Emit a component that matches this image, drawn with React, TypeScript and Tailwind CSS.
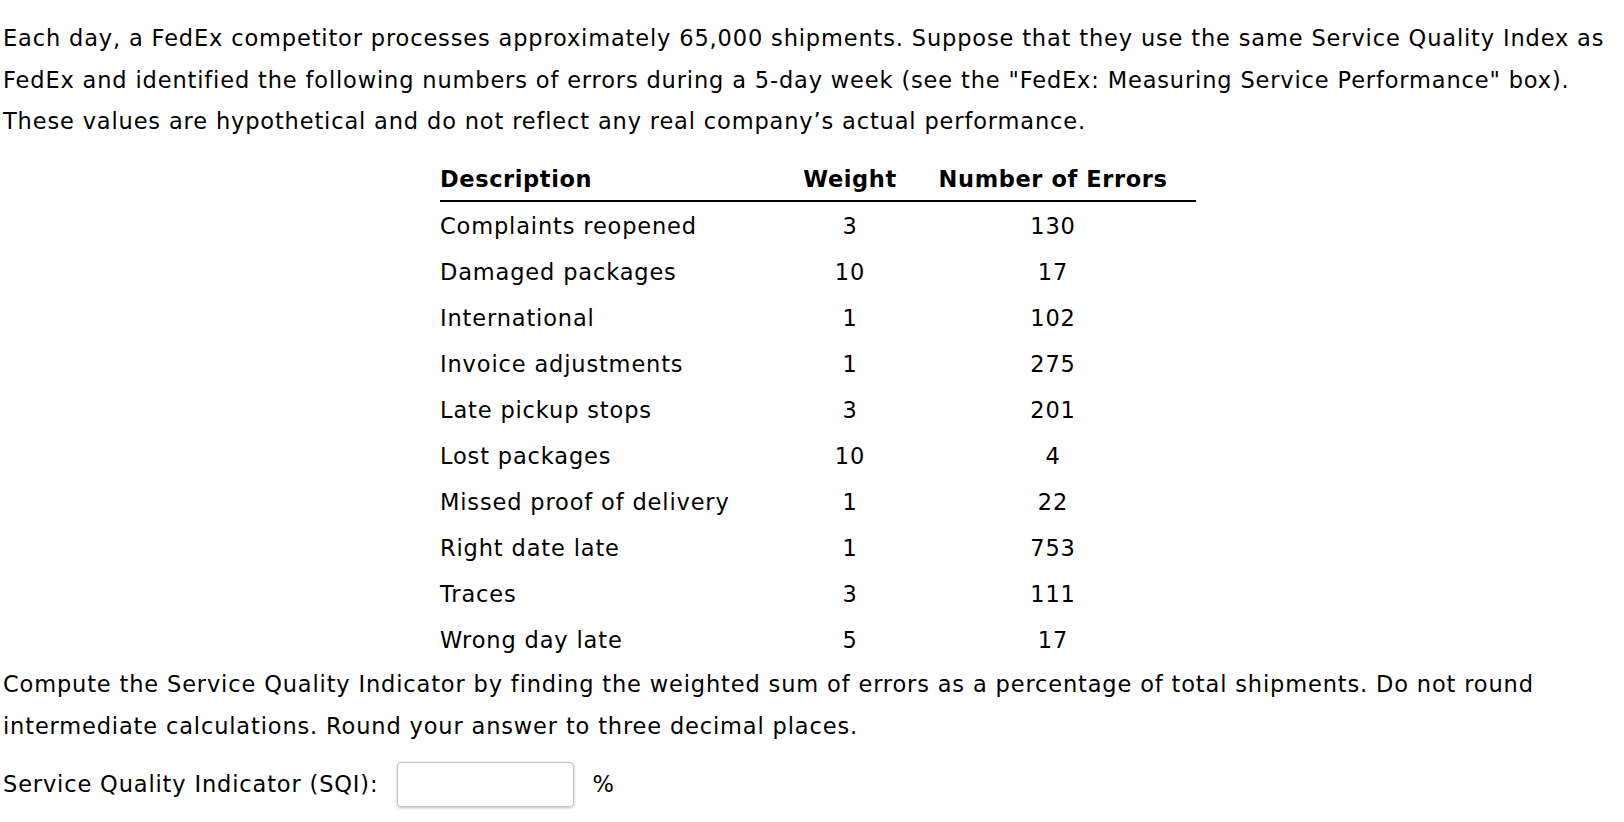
import React from "react";

const rows: [string, string, string][] = [
  ["Complaints reopened", "3", "130"],
  ["Damaged packages", "10", "17"],
  ["International", "1", "102"],
  ["Invoice adjustments", "1", "275"],
  ["Late pickup stops", "3", "201"],
  ["Lost packages", "10", "4"],
  ["Missed proof of delivery", "1", "22"],
  ["Right date late", "1", "753"],
  ["Traces", "3", "111"],
  ["Wrong day late", "5", "17"],
];

export default function App() {
  return (
    <div className="min-h-screen bg-white text-black pl-[3px] pt-[18px] font-['DejaVu_Sans',Verdana,sans-serif] text-[22.5px] leading-[41.5px] tracking-[0.85px] whitespace-nowrap">
      <p>
        Each day, a FedEx competitor processes approximately 65,000 shipments. Suppose that they use the same Service Quality Index as
        <br />
        FedEx and identified the following numbers of errors during a 5-day week (see the "FedEx: Measuring Service Performance" box).
        <br />
        These values are hypothetical and do not reflect any real company’s actual performance.
      </p>

      <div className="ml-[437px] mt-[17px] w-[756px]">
        <div className="flex font-bold h-[42px] items-center border-b-2 border-black tracking-[0.6px]">
          <div className="w-[350px]">Description</div>
          <div className="w-[120px] text-center">Weight</div>
          <div className="w-[286px] text-center">Number of Errors</div>
        </div>
        <div className="pt-[2.5px]">
          {rows.map(([d, w, n]) => (
            <div key={d} className="flex h-[46px] items-center">
              <div className="w-[350px]">{d}</div>
              <div className="w-[120px] text-center">{w}</div>
              <div className="w-[286px] text-center">{n}</div>
            </div>
          ))}
        </div>
      </div>

      <p>
        Compute the Service Quality Indicator by finding the weighted sum of errors as a percentage of total shipments. Do not round
        <br />
        intermediate calculations. Round your answer to three decimal places.
      </p>

      <div className="flex items-center mt-[15px]">
        <span>Service Quality Indicator (SQI):</span>
        <input
          type="text"
          className="ml-[19px] w-[177px] h-[45px] rounded-[4px] border border-[#c4c4c4] shadow-[0_1px_3px_rgba(0,0,0,0.25)] outline-none"
        />
        <span className="ml-[18px]">%</span>
      </div>
    </div>
  );
}
